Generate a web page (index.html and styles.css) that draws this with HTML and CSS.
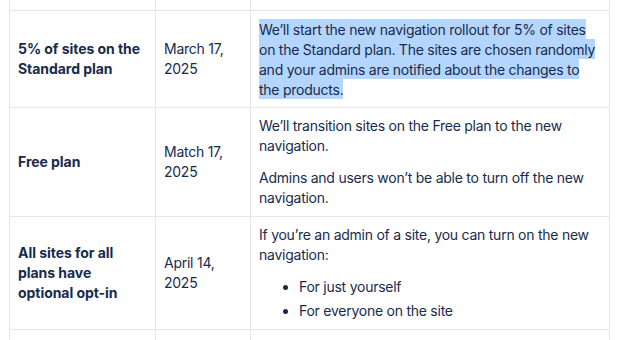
FILE: index.html
```html
<!DOCTYPE html>
<html>
<head>
<meta charset="utf-8">
<link rel="stylesheet" href="styles.css">
</head>
<body>
<div class="wrap">
<table class="rollout">
  <colgroup>
    <col class="c1">
    <col class="c2">
    <col class="c3">
  </colgroup>
  <tr class="cut">
    <td></td><td></td><td></td>
  </tr>
  <tr>
    <th>5% of sites on the Standard plan</th>
    <td>March 17, 2025</td>
    <td class="desc"><p><span class="sel">We’ll start the new navigation rollout for 5% of sites on the Standard plan. The sites are chosen randomly and your admins are notified about the changes to the products.</span></p></td>
  </tr>
  <tr>
    <th>Free plan</th>
    <td>Match 17, 2025</td>
    <td class="desc">
      <p>We’ll transition sites on the Free plan to the new navigation.</p>
      <p>Admins and users won’t be able to turn off the new navigation.</p>
    </td>
  </tr>
  <tr>
    <th>All sites for all plans have optional opt-in</th>
    <td>April 14, 2025</td>
    <td class="desc">
      <p>If you’re an admin of a site, you can turn on the new navigation:</p>
      <ul>
        <li>For just yourself</li>
        <li>For everyone on the site</li>
      </ul>
    </td>
  </tr>
  <tr class="cut">
    <td></td><td></td><td></td>
  </tr>
</table>
</div>
</body>
</html>
```

FILE: styles.css
```css
html, body {
  margin: 0;
  padding: 0;
  background: #ffffff;
}
.wrap {
  width: 618px;
  height: 340px;
  overflow: hidden;
  padding-left: 9px;
  box-sizing: border-box;
}
.rollout {
  border-collapse: collapse;
  width: 600px;
  table-layout: fixed;
  font-family: Inter, "Noto Sans", sans-serif;
  font-size: 14px;
  line-height: 20px;
  color: #172B4D;
}
.c1 { width: 146px; }
.c2 { width: 95px; }
.c3 { width: 359px; }
.rollout th, .rollout td {
  border: 1px solid #E6E7EA;
  padding: 8px;
  vertical-align: middle;
  text-align: left;
}
.rollout td {
  letter-spacing: -0.25px;
}
.rollout th {
  font-weight: 700;
  letter-spacing: -0.05px;
}
.rollout td.desc {
  vertical-align: top;
}
.rollout tr.cut td {
  border-top: none;
  height: 10px;
  padding: 0;
}
.rollout p {
  margin: 0;
}
.rollout p + p {
  margin-top: 12px;
}
.rollout ul {
  margin: 12px 0 0;
  padding-left: 40px;
}
.rollout li + li {
  margin-top: 4px;
}
.sel {
  background: #B4D5FE;
  padding: 1.5px 0;
}
```
